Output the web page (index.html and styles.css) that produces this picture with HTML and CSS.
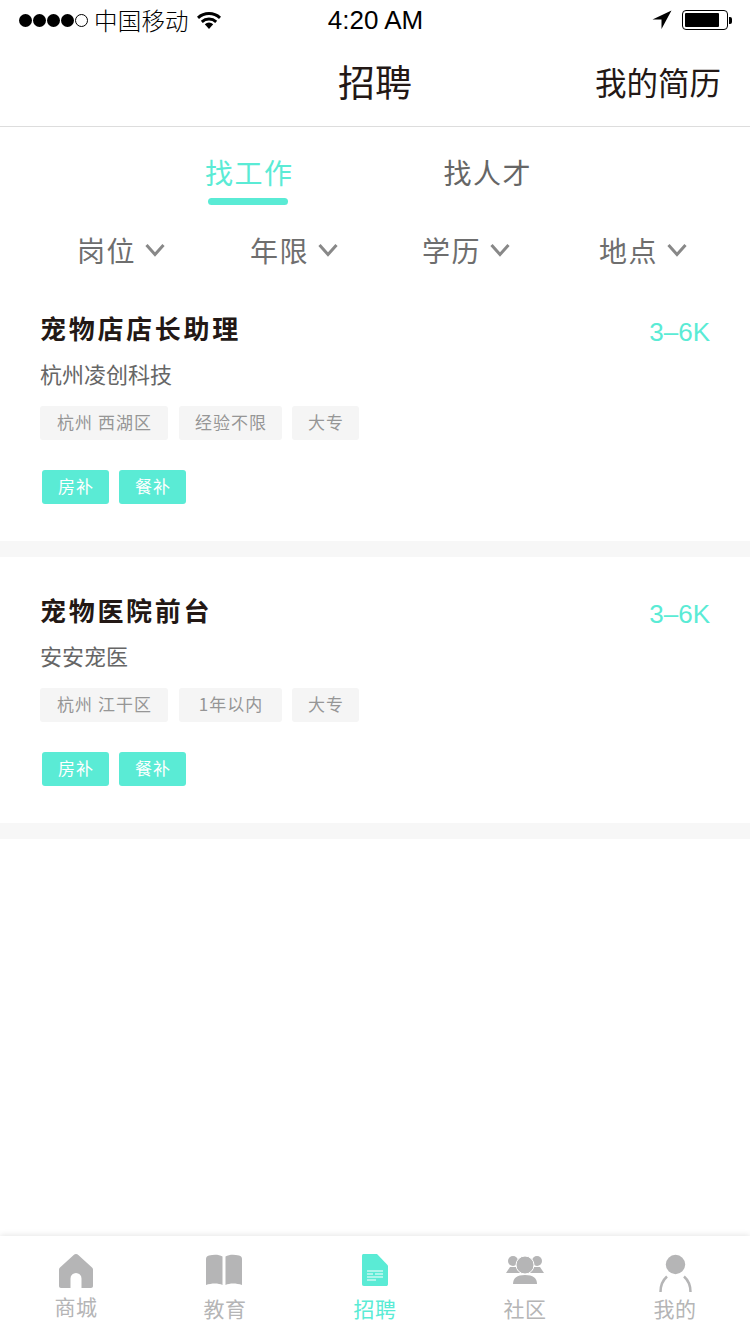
FILE: index.html
```html
<!DOCTYPE html>
<html lang="zh-CN">
<head>
<meta charset="UTF-8" />
<title>招聘</title>
<link rel="stylesheet" href="styles.css">
</head>
<body>

<div class="page">
    <!-- status bar -->
    <div class="status">
        <div class="status-left">
            <span class="dots"><i></i><i></i><i></i><i></i><i class="off"></i></span>
            <span class="carrier">中国移动</span>
            <svg class="wifi" width="24" height="18" viewBox="0 0 24 18">
                <path d="M12 18 7.800 13.200a6.300 6.300 0 0 1 8.400 0z" fill="#000"/>
                <path d="M1 6.800a16.500 16.500 0 0 1 22 0M4.800 10.800a11 11 0 0 1 14.400 0" fill="none" stroke="#000" stroke-width="3"/>
            </svg>
        </div>
        <div class="clock">4:20 AM</div>
        <div class="status-right">
            <svg width="20" height="20" viewBox="0 0 20 20"><path d="M19.500 .5 .5 9.500h9v9.500z" fill="#000"/></svg>
            <div class="battery"><div class="battery-fill"></div></div>
            <div class="battery-tip"></div>
        </div>
    </div>

    <!-- nav -->
    <div class="nav">
        <div class="nav-title">招聘</div>
        <div class="nav-link">我的简历</div>
    </div>

    <!-- tabs -->
    <div class="tabs">
        <div class="tab active">找工作<div class="tab-line"></div></div>
        <div class="tab">找人才</div>
    </div>

    <!-- filters -->
    <div class="filters">
        <div class="filter">岗位<svg class="chev" width="20" height="14" viewBox="0 0 20 14"><path d="M1.500 2 10 11.500 18.500 2" fill="none" stroke="#888" stroke-width="3"/></svg></div>
        <div class="filter">年限<svg class="chev" width="20" height="14" viewBox="0 0 20 14"><path d="M1.500 2 10 11.500 18.500 2" fill="none" stroke="#888" stroke-width="3"/></svg></div>
        <div class="filter">学历<svg class="chev" width="20" height="14" viewBox="0 0 20 14"><path d="M1.500 2 10 11.500 18.500 2" fill="none" stroke="#888" stroke-width="3"/></svg></div>
        <div class="filter">地点<svg class="chev" width="20" height="14" viewBox="0 0 20 14"><path d="M1.500 2 10 11.500 18.500 2" fill="none" stroke="#888" stroke-width="3"/></svg></div>
    </div>

    <!-- job cards -->
    <div class="job">
        <div class="job-head">
            <div class="job-title">宠物店店长助理</div>
            <div class="job-pay">3–6K</div>
        </div>
        <div class="job-company">杭州凌创科技</div>
        <div class="tags">
            <span class="tag t-area">杭州 西湖区</span>
            <span class="tag t-exp">经验不限</span>
            <span class="tag t-edu">大专</span>
        </div>
        <div class="perks">
            <span class="perk">房补</span>
            <span class="perk">餐补</span>
        </div>
    </div>

    <div class="job">
        <div class="job-head">
            <div class="job-title">宠物医院前台</div>
            <div class="job-pay">3–6K</div>
        </div>
        <div class="job-company">安安宠医</div>
        <div class="tags">
            <span class="tag t-area">杭州 江干区</span>
            <span class="tag t-exp">1年以内</span>
            <span class="tag t-edu">大专</span>
        </div>
        <div class="perks">
            <span class="perk">房补</span>
            <span class="perk">餐补</span>
        </div>
    </div>

    <!-- tab bar -->
    <div class="tabbar">
        <div class="bar-item raised">
            <svg width="40" height="40" viewBox="0 0 40 40"><path d="M21 0c1 0 1.600.4 2.300 1L37 13.500c.7.700 1 1.300 1 2.300V32c0 1.200-.8 2-2 2H26.500V24.500a5.500 5.500 0 0 0-11 0V34H6c-1.200 0-2-.8-2-2V15.800c0-1 .3-1.600 1-2.300L18.700 1c.7-.6 1.300-1 2.300-1z" fill="#b5b5b6"/></svg>
            <span>商城</span>
        </div>
        <div class="bar-item">
            <svg width="40" height="40" viewBox="0 0 40 40"><path d="M1 5c0-2 1-3 3-3.500 5-1 10-1 13.500 1V31c-4-2-11-2-16.500 0zM20.500 2.500c3.500-2 8.500-2 13.500-1 2 .5 3 1.500 3 3.500V31c-5.500-2-12.500-2-16.500 0z" fill="#b5b5b6"/></svg>
            <span>教育</span>
        </div>
        <div class="bar-item on">
            <svg width="40" height="40" viewBox="0 0 40 40"><path d="M9 0h13l11 11.500V30c0 1.500-.8 2-2 2H9c-1.500 0-2-.8-2-2V2c0-1.500.5-2 2-2z" fill="#5aebd5"/><path d="M12 17h16M12 20h6M20 20h8M12 23h16M12 26h9" stroke="#fff" stroke-width="1"/></svg>
            <span>招聘</span>
        </div>
        <div class="bar-item">
            <svg width="40" height="40" viewBox="0 0 40 40"><g fill="#b5b5b6"><circle cx="8" cy="7" r="5"/><circle cx="32" cy="7" r="5"/><path d="M1 19 5 13h7l4 6zM24 19l4-6h7l4 6z"/><path d="M8 30c0-6 4-9 12-9s12 3 12 9z"/></g><circle cx="20" cy="11" r="9" fill="#b5b5b6" stroke="#fff" stroke-width="1"/></svg>
            <span>社区</span>
        </div>
        <div class="bar-item">
            <svg width="40" height="40" viewBox="0 0 40 40"><circle cx="20.500" cy="10.500" r="9.700" fill="#b5b5b6"/><path d="M5.500 38c0-7 2.500-12 6.500-15.500M35.500 38c0-7-2.500-12-6.500-15.500" fill="none" stroke="#b5b5b6" stroke-width="2.500"/></svg>
            <span>我的</span>
        </div>
    </div>
</div>

</body>
</html>
```

FILE: styles.css
```css
/* --- Layout --------------------------------------------------------- */
body{
    margin:0;
    background:#fff;
    font-family:"Noto Sans CJK SC","Liberation Sans",sans-serif;
}
.page{
    position:relative;
    width:750px;
    height:1334px;
    overflow:hidden;
}

/* --- Status bar ----------------------------------------------------- */
.status{
    height:40px;
    display:grid;
    grid-template-columns:1fr auto 1fr;
    align-items:center;
    padding:0 18px 0 19px;
    color:#000;
}
.status-left{
    display:flex;
    align-items:center;
}
.dots{
    display:flex;
    gap:1px;
}
.dots i{
    width:13px;
    height:13px;
    border-radius:50%;
    background:#000;
}
.dots i.off{
    box-sizing:border-box;
    background:none;
    border:1px solid #000;
}
.carrier{
    margin-left:6px;
    font-size:23.500px;
    font-weight:300;
    line-height:38px;
    letter-spacing:.2px;
}
.wifi{
    margin-left:8px;
}
.clock{
    font-family:"Liberation Sans",sans-serif;
    font-size:26px;
}
.status-right{
    display:flex;
    align-items:center;
    justify-content:flex-end;
}
.battery{
    box-sizing:border-box;
    width:46px;
    height:20px;
    margin-left:10px;
    padding:2px;
    border:1px solid #000;
    border-radius:4px;
}
.battery-fill{
    width:34px;
    height:14px;
    background:#000;
    border-radius:1px;
}
.battery-tip{
    width:3px;
    height:7px;
    margin-left:1px;
    background:#000;
    border-radius:0 2px 2px 0;
}

/* --- Nav ------------------------------------------------------------ */
.nav{
    position:relative;
    height:86px;
    border-bottom:1px solid #ddd;
    display:flex;
    justify-content:center;
    color:#231815;
}
.nav-title{
    font-size:37px;
    line-height:82px;
}
.nav-link{
    position:absolute;
    right:29px;
    top:0;
    font-size:31.500px;
    line-height:82px;
}

/* --- Tabs and filters ----------------------------------------------- */
.tabs{
    display:flex;
    gap:150px;
    padding:24px 0 0 205px;
    height:70px;
}
.tab{
    font-size:28px;
    line-height:42px;
    letter-spacing:1.500px;
    color:#666;
}
.tab.active{
    color:#5aebd5;
}
.tab-line{
    width:80px;
    height:7px;
    margin:5px 0 0 3px;
    background:#5aebd5;
    border-radius:4px;
}
.filters{
    display:grid;
    grid-template-columns:173px 172px 177px auto;
    padding:8px 0 0 77px;
    height:46px;
}
.filter{
    display:flex;
    align-items:center;
    height:42px;
    font-size:28px;
    letter-spacing:1.500px;
    color:#6e6e6e;
}
.chev{
    margin-left:9px;
}

/* --- Job cards ------------------------------------------------------ */
.job{
    box-sizing:border-box;
    height:282px;
    padding:32px 40px 0;
    border-bottom:16px solid #f7f7f7;
}
.job-head{
    display:flex;
    justify-content:space-between;
}
.job-title{
    font-size:26px;
    font-weight:bold;
    line-height:42px;
    letter-spacing:2.700px;
    color:#231815;
}
.job-pay{
    font-family:"Liberation Sans",sans-serif;
    font-size:26px;
    line-height:50px;
    color:#5aebd5;
}
.job-company{
    margin-top:1px;
    font-size:22px;
    line-height:30px;
    color:#666;
}
.tags,.perks{
    display:flex;
}
.tags{
    margin-top:18px;
}
.tag,.perk{
    box-sizing:border-box;
    height:34px;
    line-height:32px;
    text-align:center;
    font-size:17px;
    letter-spacing:1px;
    border-radius:3px;
}
.tag{
    margin-right:11px;
    padding-left:1px;
    background:#f5f5f5;
    color:#969696;
}
.t-area{ width:128px; }
.t-exp{ width:103px; margin-right:10px; }
.t-edu{ width:67px; }
.perks{
    margin-top:30px;
    padding-left:2px;
    gap:10px;
}
.perk{
    width:67px;
    padding-left:1px;
    background:#5aebd5;
    color:#fff;
}

/* --- Tab bar -------------------------------------------------------- */
.tabbar{
    position:absolute;
    left:0;
    right:0;
    bottom:0;
    height:98px;
    display:grid;
    grid-template-columns:repeat(5,150px);
    background:#fff;
    box-shadow:0 -1px 6px rgba(0,0,0,.1);
}
.bar-item{
    position:relative;
    padding-top:18px;
    text-align:center;
    color:#b5b5b6;
}
.bar-item svg{
    display:block;
    margin:0 auto;
}
.bar-item span{
    position:absolute;
    left:0;
    right:0;
    top:57px;
    font-size:21px;
    line-height:30px;
    letter-spacing:.5px;
}
.bar-item.raised span{
    top:55px;
    padding-left:2px;
}
.bar-item.on{
    color:#5aebd5;
}
```
